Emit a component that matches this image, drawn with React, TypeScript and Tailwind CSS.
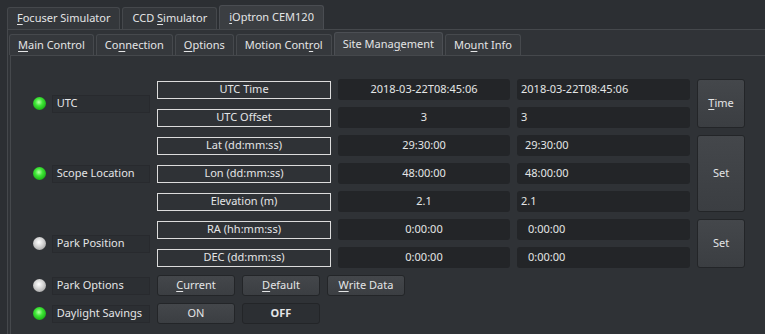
import React from 'react';

const font = "font-['Noto_Sans',sans-serif]";

function Mn({ text, at }: { text: string; at: number }) {
  // underline one letter, like a Qt mnemonic
  return (
    <span className="whitespace-pre">
      {text.slice(0, at)}
      <span className="underline underline-offset-2">{text[at]}</span>
      {text.slice(at + 1)}
    </span>
  );
}

function OuterTab({ children, active }: { children: React.ReactNode; active?: boolean }) {
  return (
    <div
      className={
        'flex items-center px-[9px] border border-b-0 rounded-t-[3px] text-[11px] text-[#e4e5e6] ' +
        (active ? 'h-[24px] bg-[#3b3e42] border-[#4a4d52]' : 'h-[22px] bg-[#34373b] border-[#45484c]')
      }
    >
      {children}
    </div>
  );
}

function InnerTab({ children, active }: { children: React.ReactNode; active?: boolean }) {
  return (
    <div
      className={
        'flex items-center px-[8px] border border-b-0 rounded-t-[3px] text-[11px] text-[#e4e5e6] ' +
        (active ? 'h-[23px] bg-[#3d4044] border-[#4c4f54]' : 'h-[21px] bg-[#35383c] border-[#46494d]')
      }
    >
      {children}
    </div>
  );
}

function Led({ on }: { on: boolean }) {
  return (
    <div
      className={
        'w-[13px] h-[13px] rounded-full shrink-0 ' +
        (on
          ? 'bg-[radial-gradient(circle_at_45%_40%,#b8ffa8_0%,#3ee636_35%,#17a812_80%,#0f7a0c_100%)]'
          : 'bg-[radial-gradient(circle_at_45%_40%,#ffffff_0%,#d6d6d6_40%,#9a9a9a_90%,#7a7a7a_100%)]')
      }
    />
  );
}

function PropLabel({ on, text }: { on: boolean; text: string }) {
  return (
    <div className="flex items-center h-full">
      <div className="w-[22px] flex justify-start pl-[3px]">
        <Led on={on} />
      </div>
      <div className="w-[100px] h-[18px] flex items-center pl-[4px] bg-[#2c2f33] border border-[#282a2e] text-[11px] text-[#e4e5e6] whitespace-nowrap">
        {text}
      </div>
    </div>
  );
}

function FieldLabel({ text }: { text: string }) {
  return (
    <div className="self-center h-[18px] flex items-center justify-center border border-[#dcdcdc] text-[11px] text-[#e4e5e6]">
      {text}
    </div>
  );
}

function Value({ text, left }: { text: string; left?: string }) {
  return (
    <div
      className={
        'h-[21px] flex items-center rounded-[3px] bg-[#232528] text-[11px] text-[#e4e5e6] ' +
        (left ? left : 'justify-center')
      }
    >
      {text}
    </div>
  );
}

function Btn({ children, className = '' }: { children: React.ReactNode; className?: string }) {
  return (
    <div
      className={
        'flex items-center justify-center rounded-[3px] border border-[#232528] bg-[linear-gradient(#44474b,#3b3e42)] text-[11px] text-[#e4e5e6] ' +
        className
      }
    >
      {children}
    </div>
  );
}

export default function App() {
  return (
    <div className={`w-[765px] h-[334px] overflow-hidden bg-[#2c2f33] pt-[5px] pl-[7px] ${font}`}>
      {/* Driver tabs */}
      <div className="flex items-end gap-[2px] h-[24px]">
        <OuterTab><Mn text="Focuser Simulator" at={0} /></OuterTab>
        <OuterTab><Mn text="CCD Simulator" at={4} /></OuterTab>
        <OuterTab active><Mn text="iOptron CEM120" at={0} /></OuterTab>
      </div>

      <div className="h-[400px] border-l border-t border-[#45484c] bg-[#303337] pl-[2px] pt-[2px]">
        {/* Group tabs */}
        <div className="flex items-end gap-[2px] h-[23px] -ml-px">
          <InnerTab><Mn text="Main Control" at={0} /></InnerTab>
          <InnerTab><Mn text="Connection" at={2} /></InnerTab>
          <InnerTab><Mn text="Options" at={0} /></InnerTab>
          <InnerTab><Mn text="Motion Control" at={11} /></InnerTab>
          <InnerTab active><Mn text="Site Management" at={9} /></InnerTab>
          <InnerTab><Mn text="Mount Info" at={2} /></InnerTab>
        </div>

        <div className="h-full border-l border-t border-[#45484c] bg-[#2f3236] pl-[19px] pt-[23px]">
          <div className="grid grid-cols-[120px_174px_172px_173px_48px] auto-rows-[21px] gap-x-[7px] gap-y-[7px]">
            {/* UTC */}
            <div className="row-span-2"><PropLabel on text="UTC" /></div>
            <FieldLabel text="UTC Time" />
            <Value text="2018-03-22T08:45:06" />
            <Value text="2018-03-22T08:45:06" left="pl-[4px]" />
            <Btn className="row-span-2"><Mn text="Time" at={0} /></Btn>
            <FieldLabel text="UTC Offset" />
            <Value text="3" />
            <Value text="3" left="pl-[4px]" />

            {/* Scope Location */}
            <div className="row-span-3"><PropLabel on text="Scope Location" /></div>
            <FieldLabel text="Lat (dd:mm:ss)" />
            <Value text="29:30:00" />
            <Value text="29:30:00" left="pl-[8px]" />
            <Btn className="row-span-3">Set</Btn>
            <FieldLabel text="Lon (dd:mm:ss)" />
            <Value text="48:00:00" />
            <Value text="48:00:00" left="pl-[8px]" />
            <FieldLabel text="Elevation (m)" />
            <Value text="2.1" />
            <Value text="2.1" left="pl-[4px]" />

            {/* Park Position */}
            <div className="row-span-2"><PropLabel on={false} text="Park Position" /></div>
            <FieldLabel text="RA (hh:mm:ss)" />
            <Value text="0:00:00" />
            <Value text="0:00:00" left="pl-[11px]" />
            <Btn className="row-span-2">Set</Btn>
            <FieldLabel text="DEC (dd:mm:ss)" />
            <Value text="0:00:00" />
            <Value text="0:00:00" left="pl-[11px]" />

            {/* Park Options */}
            <PropLabel on={false} text="Park Options" />
            <div className="col-span-4 flex gap-[7px]">
              <Btn className="w-[78px]"><Mn text="Current" at={0} /></Btn>
              <Btn className="w-[78px]"><Mn text="Default" at={0} /></Btn>
              <Btn className="w-[78px]"><Mn text="Write Data" at={0} /></Btn>
            </div>

            {/* Daylight Savings */}
            <PropLabel on text="Daylight Savings" />
            <div className="col-span-4 flex gap-[7px]">
              <Btn className="w-[78px]">ON</Btn>
              <div className="w-[78px] flex items-center justify-center rounded-[3px] border border-[#232528] bg-[#2c2f33] text-[11px] font-bold text-[#e4e5e6]">
                OFF
              </div>
            </div>
          </div>
        </div>
      </div>
    </div>
  );
}
